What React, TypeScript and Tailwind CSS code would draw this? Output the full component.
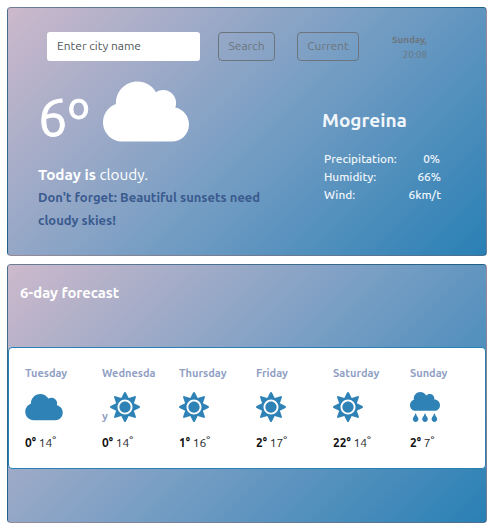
import type { ReactNode } from "react";
import { FaCloud, FaCloudRain, FaSun } from "react-icons/fa";

const card =
  "rounded-[4px] border border-black/25 bg-[linear-gradient(135deg,#cdb9cc_0%,#7a9fc4_50%,#2980b5_100%)]";

type Day = { name: string; wrap?: string; icon: ReactNode; low: string; high: string };

const sun = <FaSun className="h-[30px] w-[30px]" />;

const days: Day[] = [
  { name: "Tuesday", icon: <FaCloud className="h-[30px] w-[38px]" />, low: "0", high: "14" },
  { name: "Wednesda", wrap: "y", icon: sun, low: "0", high: "14" },
  { name: "Thursday", icon: sun, low: "1", high: "16" },
  { name: "Friday", icon: sun, low: "2", high: "17" },
  { name: "Saturday", icon: sun, low: "22", high: "14" },
  { name: "Sunday", icon: <FaCloudRain className="h-[30px] w-[30px]" />, low: "2", high: "7" },
];

const details = [
  { label: "Precipitation:", value: "0%", pad: "pr-[1px]" },
  { label: "Humidity:", value: "66%", pad: "" },
  { label: "Wind:", value: "6km/t", pad: "" },
];

export default function App() {
  return (
    <main className="flex h-[527px] w-[491px] flex-col gap-2 overflow-hidden whitespace-nowrap bg-white pl-[7px] pt-[7px] font-['Ubuntu','Noto_Sans',sans-serif]">
      <section className={`${card} h-[249px] w-[480px] shrink-0`}>
        <form className="flex pl-[39px] pt-6" onSubmit={(e) => e.preventDefault()}>
          <input
            placeholder="Enter city name"
            className="h-[29px] w-[153px] rounded-[3px] bg-white px-[10px] pb-[2px] text-[12px] text-[#495057] placeholder:text-[#50565c]"
          />
          <button className="ml-[18px] h-[29px] w-[57px] rounded-[4px] border border-[#6c757d] pb-[2px] text-[12px] text-[#6c757d]">
            Search
          </button>
          <button className="ml-[22px] h-[29px] w-[62px] rounded-[4px] border border-[#6c757d] pb-[2px] text-[12px] text-[#6c757d]">
            Current
          </button>
          <div className="ml-[33px] w-[35px] text-right text-[9.7px] leading-[15px] text-[#6c757d]">
            <div className="flex justify-end font-bold">Sunday,</div>
            <div>20:08</div>
          </div>
        </form>
        <div className="flex pl-[30px] pt-[15px] text-white">
          <div className="w-[284px]">
            <div className="flex">
              <div className="h-[76px] w-[65px] pt-[5px] text-[52px] leading-[70px] [-webkit-text-stroke:0.8px_white]">
                6º
              </div>
              <FaCloud className="h-[69px] w-[86px]" />
            </div>
            <p className="mt-[10px] text-[15.3px] leading-6">
              <b>Today is</b> cloudy.
            </p>
            <p className="-mt-px text-[13px] font-bold leading-[23px] text-[#3a5a8e]">
              Don't forget: Beautiful sunsets need
              <br />
              cloudy skies!
            </p>
          </div>
          <div className="w-[119px] pt-[29px] text-[#f1f6fb]">
            <h1 className="text-[19px] font-bold leading-[28px]">Mogreina</h1>
            <dl className="mt-[16px] pl-[2px] text-[11.8px] font-medium leading-[18px]">
              {details.map((d) => (
                <div key={d.label} className="flex justify-between">
                  <dt>{d.label}</dt>
                  <dd className={d.pad}>{d.value}</dd>
                </div>
              ))}
            </dl>
          </div>
        </div>
      </section>
      <section className={`${card} h-[259px] w-[480px] shrink-0`}>
        <h2 className="h-[82px] pl-3 pt-[16px] text-[14.8px] font-bold leading-6 text-white">
          6-day forecast
        </h2>
        <div className="grid h-[122px] grid-cols-[repeat(6,77px)] rounded-[4px] border border-[#2980b5] bg-white pl-4 pt-4">
          {days.map((d) => (
            <div key={d.name} className="text-[11px] text-[#212529]">
              <div className="h-[28px] font-bold leading-[18px] text-[#919fc5]">{d.name}</div>
              <div className="flex h-[33px] text-[#2f82b5]">
                {d.wrap && <span className="w-[8px] pt-[15px] font-bold leading-[18px] text-[#919fc5]">{d.wrap}</span>}
                {d.icon}
              </div>
              <div className="mt-[9px] text-[12px] leading-[18px]">
                <b className="text-[#111]">{d.low}°</b> {d.high}
                <span className="relative -top-[2px]">°</span>
              </div>
            </div>
          ))}
        </div>
      </section>
    </main>
  );
}
